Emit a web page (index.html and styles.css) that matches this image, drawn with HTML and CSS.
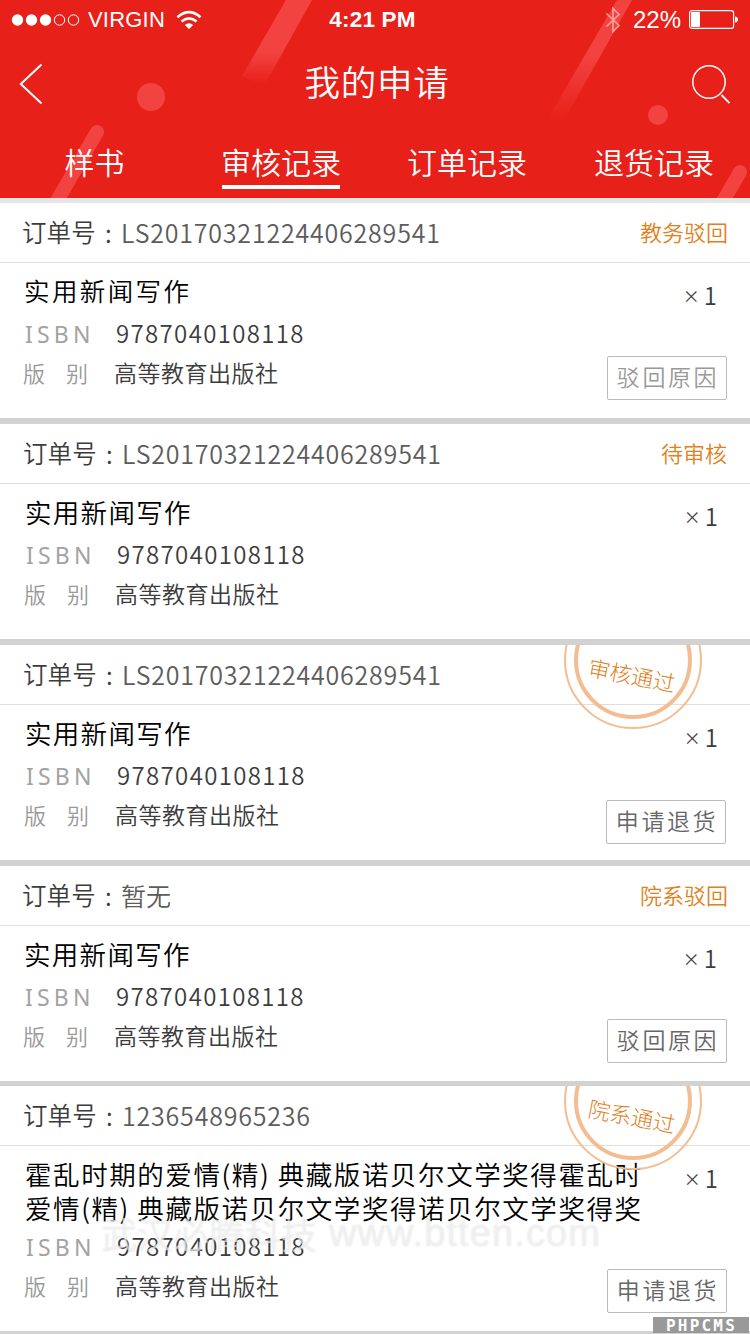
FILE: index.html
```html
<!DOCTYPE html>
<html lang="zh-CN">
<head>
<meta charset="utf-8">
<title>我的申请</title>
<link rel="stylesheet" href="styles.css">
</head>
<body>
<div class="screen">
  <header class="header">
    <svg class="decor" width="750" height="198" viewBox="0 0 750 198">
      <defs>
        <linearGradient id="fadeA" gradientUnits="userSpaceOnUse" x1="0" y1="52" x2="0" y2="84"><stop offset="0" stop-color="#f24340"/><stop offset="1" stop-color="#f24340" stop-opacity="0"/></linearGradient>
        <linearGradient id="fadeB" gradientUnits="userSpaceOnUse" x1="0" y1="55" x2="0" y2="120"><stop offset="0" stop-color="#f24340"/><stop offset="1" stop-color="#f24340" stop-opacity="0"/></linearGradient>
      </defs>
      <path d="M286 0H312L264 86L242 76Z" fill="url(#fadeA)"/>
      <path d="M617 0H632L563 122L549 117Z" fill="url(#fadeB)"/>
      <circle cx="151" cy="97" r="14" fill="#f24340"/>
      <circle cx="658" cy="115" r="10" fill="#f24340"/>
      <path d="M97 132L54 206M740 172L718 210" stroke="#f24340" stroke-width="14" stroke-linecap="round"/>
    </svg>
    <div class="statusbar">
      <div class="carrier">
        <svg width="70" height="14" viewBox="0 0 70 14"><g fill="#fff"><circle cx="7.500" cy="7" r="5.700"/><circle cx="21.500" cy="7" r="5.700"/><circle cx="35.500" cy="7" r="5.700"/></g><g fill="none" stroke="#fff"><circle cx="49.500" cy="7" r="5.200"/><circle cx="63.500" cy="7" r="5.200"/></g></svg>
        <span class="carrier-name">VIRGIN</span>
        <svg width="26" height="20" viewBox="0 0 26 20"><g fill="none" stroke="#fff" stroke-width="2.7"><path d="M1.5 7.2Q13 -2.8 24.500 7.2"/><path d="M5.500 11.600Q13 5 20.500 11.600"/></g><path d="M8.800 15Q13 11.500 17.200 15L13 19Z" fill="#fff"/></svg>
      </div>
      <div class="clock">4:21 PM</div>
      <div class="power">
        <svg class="bt" width="16" height="26" viewBox="0 0 16 26"><path d="M1.500 6.500L14 18.500L8 24.500V1.500L14 7.500L1.500 19.500" fill="none" stroke="#f9a09c" stroke-width="1.700"/></svg>
        <span class="percent">22%</span>
        <svg width="50" height="20" viewBox="0 0 50 20"><rect x=".6" y=".6" width="44" height="17.800" rx="2.500" fill="none" stroke="#fff" stroke-width="1.200"/><rect x="2" y="2" width="9" height="15" rx="1" fill="#fff"/><path d="M46 6.500Q49 7 49 9.500T46 12.500Z" fill="#fff"/></svg>
      </div>
    </div>
    <div class="navbar">
      <svg width="30" height="44" viewBox="0 0 30 44"><path d="M23.500 2.500L2.800 22L23.500 41.500" fill="none" stroke="#fff" stroke-width="2"/></svg>
      <h1 class="nav-title">我的申请</h1>
      <svg width="40" height="42" viewBox="0 0 40 42"><circle cx="18" cy="19" r="16.200" fill="none" stroke="#fff" stroke-width="1.500"/><path d="M30.500 32L38.500 40.200" stroke="#fff" stroke-width="1.800"/></svg>
    </div>
    <nav class="tabs">
      <span class="tab">样书</span>
      <span class="tab active">审核记录</span>
      <span class="tab">订单记录</span>
      <span class="tab">退货记录</span>
    </nav>
  </header>
  <main class="orders">
    <section class="card first">
      <div class="card-head"><span class="label">订单号</span><span class="colon">:</span><span class="number">LS20170321224406289541</span><span class="state">教务驳回</span></div>
      <div class="card-body">
        <div class="info"><h2 class="book">实用新闻写作</h2>
          <p class="row"><span class="key latin">ISBN</span><span class="isbn">9787040108118</span></p>
          <p class="row pub"><span class="key"><i>版</i><i>别</i></span><span class="press">高等教育出版社</span></p></div>
        <div class="side"><span class="qty"><b>×</b>1</span><span class="btn muted">驳回原因</span></div>
      </div>
    </section>
    <section class="card shift">
      <div class="card-head"><span class="label">订单号</span><span class="colon">:</span><span class="number">LS20170321224406289541</span><span class="state">待审核</span></div>
      <div class="card-body">
        <div class="info"><h2 class="book">实用新闻写作</h2>
          <p class="row"><span class="key latin">ISBN</span><span class="isbn">9787040108118</span></p>
          <p class="row pub"><span class="key"><i>版</i><i>别</i></span><span class="press">高等教育出版社</span></p></div>
        <div class="side"><span class="qty"><b>×</b>1</span></div>
      </div>
    </section>
    <section class="card shift">
      <div class="card-head"><span class="label">订单号</span><span class="colon">:</span><span class="number">LS20170321224406289541</span></div>
      <div class="card-body">
        <div class="info"><h2 class="book">实用新闻写作</h2>
          <p class="row"><span class="key latin">ISBN</span><span class="isbn">9787040108118</span></p>
          <p class="row pub"><span class="key"><i>版</i><i>别</i></span><span class="press">高等教育出版社</span></p></div>
        <div class="side"><span class="qty"><b>×</b>1</span><span class="btn raised">申请退货</span></div>
      </div>
      <div class="stamp"><div class="ring"></div><span class="stamp-text">审核通过</span></div>
    </section>
    <section class="card">
      <div class="card-head"><span class="label">订单号</span><span class="colon">:</span><span class="number none">暂无</span><span class="state">院系驳回</span></div>
      <div class="card-body">
        <div class="info"><h2 class="book">实用新闻写作</h2>
          <p class="row"><span class="key latin">ISBN</span><span class="isbn">9787040108118</span></p>
          <p class="row pub"><span class="key"><i>版</i><i>别</i></span><span class="press">高等教育出版社</span></p></div>
        <div class="side"><span class="qty"><b>×</b>1</span><span class="btn">驳回原因</span></div>
      </div>
    </section>
    <section class="card shift last">
      <div class="card-head"><span class="label">订单号</span><span class="colon">:</span><span class="number">1236548965236</span></div>
      <div class="card-body">
        <div class="info"><h2 class="book">霍乱时期的爱情(精) 典藏版诺贝尔文学奖得霍乱时<br>爱情(精) 典藏版诺贝尔文学奖得诺贝尔文学奖得奖</h2>
          <p class="row"><span class="key latin">ISBN</span><span class="isbn">9787040108118</span></p>
          <p class="row pub"><span class="key"><i>版</i><i>别</i></span><span class="press">高等教育出版社</span></p></div>
        <div class="side"><span class="qty"><b>×</b>1</span><span class="btn">申请退货</span></div>
      </div>
      <div class="stamp"><div class="ring"></div><span class="stamp-text">院系通过</span></div>
    </section>
  </main>
  <div class="watermark"><span class="wm-cn">武汉必腾科技</span><span class="wm-url">www.btten.com</span></div>
  <div class="cms">PHPCMS</div>
</div>
</body>
</html>
```

FILE: styles.css
```css
* { box-sizing: border-box; }
body { margin: 0; background: #fff; }
h1, h2, p { margin: 0; font-weight: inherit; }
i { font-style: normal; }
svg { display: block; flex: none; }
.screen {
  position: relative; width: 750px; height: 1334px; overflow: hidden;
  display: flex; flex-direction: column;
  font-family: "Noto Sans CJK SC", sans-serif; font-weight: 350;
  background: #d2d2d2; white-space: nowrap;
}

/* header */
.header { position: relative; height: 198px; flex: none; background: #e8201a; color: #fff; }
.decor { position: absolute; left: 0; top: 0; }
.statusbar { position: relative; height: 40px; display: grid; grid-template-columns: 1fr auto 1fr; align-items: center; padding: 0 11px 0 10px; font: 400 23px/40px "Liberation Sans", Arial, sans-serif; }
.carrier, .power { display: flex; align-items: center; }
.carrier-name { margin: 0 11px 0 8px; font-size: 22px; letter-spacing: .2px; }
.clock { font-weight: 700; font-size: 22.500px; letter-spacing: .2px; margin-right: 4px; }
.power { justify-content: flex-end; }
.bt { margin-right: 12px; }
.percent { margin-right: 8px; font-size: 24px; }
.navbar { position: relative; height: 88px; display: flex; align-items: center; justify-content: space-between; padding: 0 19px 0 18px; }
.nav-title { font-size: 35.500px; letter-spacing: .7px; line-height: 48px; padding-bottom: 6px; margin-left: 15px; }
.tabs { position: relative; height: 61px; display: grid; grid-template-columns: 189px 184px 188px 186px; justify-items: center; }
.tab { height: 61px; padding-top: 11px; font-size: 30px; line-height: 44px; }
.tab.active { background: linear-gradient(#fff, #fff) 1px 57px / 118px 4px no-repeat; }

/* orders */
.orders { display: flex; flex-direction: column; gap: 6px; padding-top: 5px; background: linear-gradient(#e6e6e6 5px, #d2d2d2 5px); }
.card { position: relative; height: 215px; flex: none; background: #fff; overflow: hidden; color: #3c3c3c; }
.card.last { height: 245px; margin-top: -1px; }
.card.shift .info, .card.shift .qty { transform: translateX(1px); }
.card-head { height: 60px; display: flex; align-items: center; padding: 0 22px 3px; box-shadow: inset 0 -1px #dedede; font-size: 25px; line-height: 36px; }
.shift .card-head { padding-left: 23px; }
.label { width: 83px; font-size: 24.500px; letter-spacing: .1px; }
.colon { width: 16px; }
.number { color: #5c5c5c; letter-spacing: .8px; }
.number.none { letter-spacing: 0; }
.state { margin-left: auto; color: #e0811d; font-size: 22px; padding-bottom: 2px; }
.shift .state { margin-right: 1px; }
.card-body { height: 155px; display: flex; justify-content: space-between; padding: 8px 23px 0 24px; }
.info { width: 570px; margin-top: -1px; }
.last .card-body { height: 185px; }
.book { color: #000; font-size: 26.500px; letter-spacing: 1.300px; line-height: 42px; }
.first .book { font-size: 25.500px; letter-spacing: 2.400px; line-height: 40px; margin-bottom: 2px; }
.last .book { line-height: 34px; padding-top: 4px; letter-spacing: 1.570px; }
.row { display: flex; height: 39px; line-height: 40px; color: #3c3c3c; padding-top: 1px; }
.row.pub { height: 38px; }
.key { width: 92px; color: #999; font-size: 22px; display: flex; }
.key i { width: 43px; }
.pub .key { margin-left: -1px; }
.key.latin { font-family: "Noto Sans", sans-serif; font-weight: 400; font-size: 23px; letter-spacing: 4.200px; color: #a3a3a3; padding: 1px 0 0 1px; }
.isbn { font-size: 24px; letter-spacing: 1.350px; }
.press { font-size: 23px; letter-spacing: .5px; margin-left: -1px; }
.side { display: flex; flex-direction: column; align-items: flex-end; }
.qty { font-size: 24px; line-height: 36px; height: 85px; padding: 6px 10px 0 0; display: flex; gap: 4px; }
.qty b { font-weight: 400; font-size: 17px; line-height: 37px; }
.btn { width: 120px; height: 44px; border: 1px solid #bbb; border-radius: 2px; text-align: center; font-size: 23px; letter-spacing: 2.600px; line-height: 39px; padding-left: 2px; color: #666; }
.btn.muted { color: #999; }
.btn.raised { margin: 2px 1px 0 0; }
.last .btn { margin-top: 30px; }

/* approval stamps */
.stamp { position: absolute; left: 564px; top: -54px; width: 138px; height: 138px; border: 2px solid #f4bd91; border-radius: 50%; display: grid; place-items: center; }
.ring { grid-area: 1 / 1; width: 118px; height: 118px; border: 4px solid #f4bd91; border-radius: 50%; }
.stamp-text { grid-area: 1 / 1; color: #e0811d; font-weight: 300; font-size: 22px; transform: translate(-1px, 14px) rotate(11deg); }

.watermark { position: absolute; left: 101px; top: 1208px; display: flex; gap: 12px; line-height: 50px; font-size: 36px; font-weight: 350; color: rgba(245, 245, 245, .6); text-shadow: 0 0 2px rgba(190, 190, 190, .4); }
.wm-url { font-family: "Liberation Sans", sans-serif; font-size: 38px; letter-spacing: 1.100px; }
.cms { position: absolute; right: 1px; bottom: 1px; width: 96px; height: 16px; background: #999; color: #fff; font: 700 16px/17px "DejaVu Sans Mono", monospace; letter-spacing: 2.200px; padding-left: 13px; }
```
